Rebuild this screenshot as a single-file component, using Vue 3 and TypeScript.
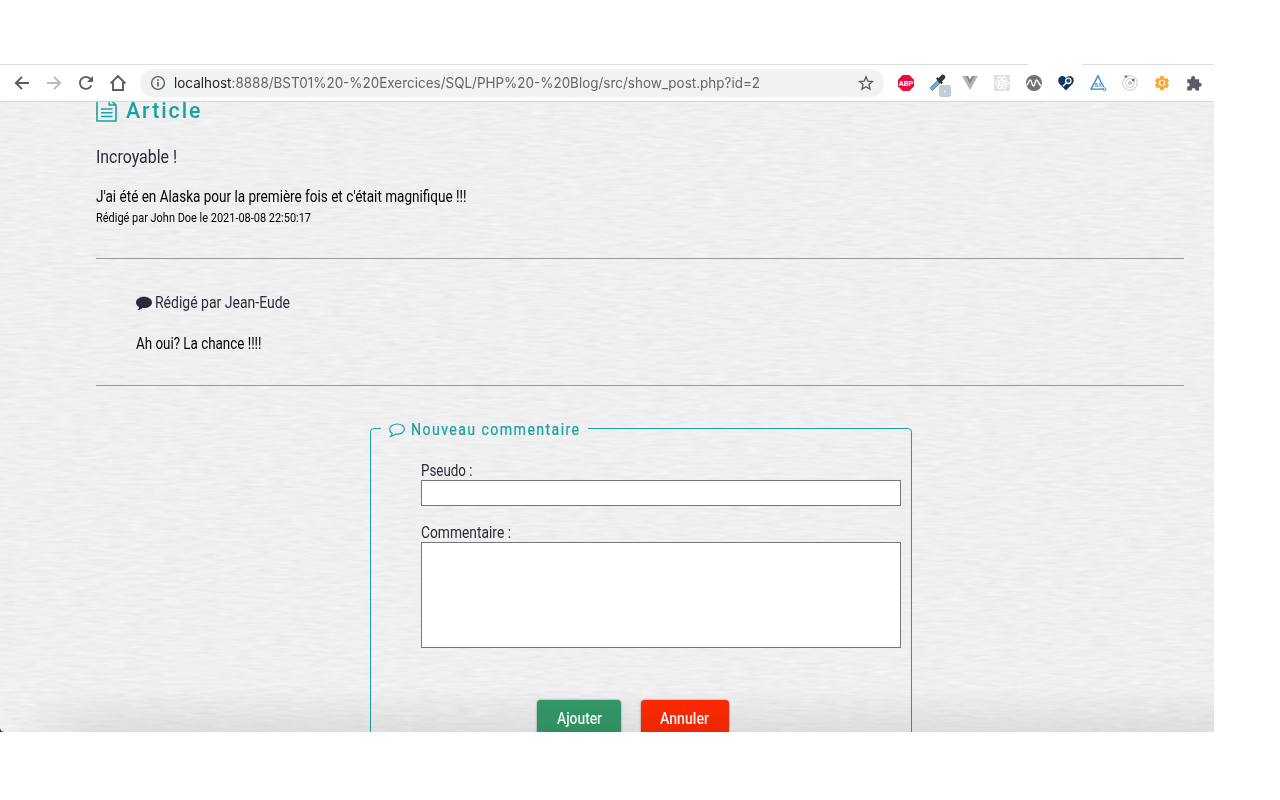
<script setup lang="ts">
import type { Directive } from 'vue'

// Condenses a line of text horizontally so it takes the given width.
const vFit: Directive<HTMLElement, number> = {
  mounted(el, { value }) {
    const natural = el.getBoundingClientRect().width
    el.style.transform = `scaleX(${value / natural})`
    el.style.marginRight = `${value - natural}px`
  },
}
</script>

<template>
  <main class="window">
    <header class="toolbar">
      <nav class="nav">
        <svg width="20" height="20" viewBox="0 0 20 20"><path d="M17 10H4M10 3.8L3.8 10l6.2 6.2" fill="none" stroke="#5a5d61" stroke-width="1.9" /></svg>
        <svg width="20" height="20" viewBox="0 0 20 20"><path d="M3 10h13M10 3.8l6.2 6.2-6.2 6.2" fill="none" stroke="#b9bbbe" stroke-width="1.9" /></svg>
        <svg width="20" height="20" viewBox="0 0 20 20"><path d="M15.4 12.3A6 6 0 1 1 14.3 5.8L16 7.6" fill="none" stroke="#5a5d61" stroke-width="1.9" /><path d="M17 3v6h-6z" fill="#5a5d61" /></svg>
        <svg width="20" height="20" viewBox="0 0 20 20"><path d="M2.6 10.4L10 3.2l7.4 7.2M5 9v8h10V9" fill="none" stroke="#5a5d61" stroke-width="1.9" /></svg>
      </nav>
      <div class="address">
        <svg width="16" height="16" viewBox="0 0 16 16"><circle cx="8" cy="8" r="6.4" fill="none" stroke="#5a5d61" stroke-width="1.4" /><path d="M8 7v4.6M8 4.3v1.6" stroke="#5a5d61" stroke-width="1.6" /></svg>
        <div class="url"><span v-fit="586" class="fit"><b>localhost</b>:8888/BST01%20-%20Exercices/SQL/PHP%20-%20Blog/src/show_post.php?id=2</span></div>
        <svg width="16" height="16" viewBox="0 0 16 16"><path d="M8 1.8l1.8 4.3 4.7.4-3.6 3 1.1 4.6L8 11.7l-4 2.4 1.1-4.6-3.600-3 4.700-.4z" fill="none" stroke="#5a5d61" stroke-width="1.300" /></svg>
      </div>
      <div class="extensions">
        <svg width="18" height="18" viewBox="0 0 18 18"><path d="M5.700 1h6.600L17 5.700v6.600L12.300 17H5.700L1 12.300V5.700z" fill="#ed0a3f" /><text x="9" y="12.200" text-anchor="middle" textLength="14.500" lengthAdjust="spacingAndGlyphs" class="abp">ABP</text></svg>
        <svg width="22" height="24" viewBox="0 0 22 24"><path d="M2 16.500L10.500 8" stroke="#66717b" stroke-width="4" /><path d="M2.500 16l7-7" stroke="#68b4e4" stroke-width="2.600" /><path d="M7.800 5l5.400 5.400" stroke="#27292d" stroke-width="2.200" /><path d="M11 7l3-3" stroke="#343538" stroke-width="4.600" stroke-linecap="round" /><rect x="10" y="12" width="12" height="12" rx="2" fill="#bfced8" /><rect x="15.200" y="17.800" width="1.600" height="1.600" fill="#fff" /></svg>
        <svg width="18" height="18" viewBox="0 0 18 18"><path d="M1 2h5l3 5.500L12 2h5L9 16z" fill="#b4b4b4" /><path d="M4.600 2H7l2 3.500L11 2h2.400L9 9.800z" fill="#888" /></svg>
        <svg width="16" height="16" viewBox="0 0 16 16"><path fill="#e2e2e2" d="M0 0h16v16H0z" /><g fill="none" stroke="#fff" stroke-width="1"><ellipse cx="8" cy="8" rx="6.500" ry="2.600" /><ellipse cx="8" cy="8" rx="6.500" ry="2.600" transform="rotate(60 8 8)" /><ellipse cx="8" cy="8" rx="6.500" ry="2.600" transform="rotate(120 8 8)" /></g><circle cx="8" cy="8" r="1.400" fill="#fff" /></svg>
        <svg width="16" height="16" viewBox="0 0 16 16"><circle cx="8" cy="8" r="8" fill="#737373" /><path d="M.5 10.500C2.500 10 2.500 5 4.200 5s1.500 6 3.300 6 1.400-6 3.200-6 1.700 5.700 4.800 5.700" fill="none" stroke="#fff" stroke-width="1.400" /></svg>
        <svg width="16" height="16" viewBox="0 0 16 16"><path d="M8 15.500L1.200 8.600C-.8 6 .3 1.300 4.100 1.100 6 1 7.300 2 8 3.200 8.700 2 10 1 11.900 1.100c3.800.2 4.900 4.900 2.900 7.500z" fill="#0d3569" /><circle cx="10.300" cy="5.800" r="2.700" fill="#164f86" stroke="#fff" stroke-width="1.300" /><path d="M8.300 7.800L5 11.200" stroke="#fff" stroke-width="1.400" /></svg>
        <svg width="18" height="18" viewBox="0 0 18 18"><path d="M14 15.200H2L9 2l5.600 11" fill="none" stroke="#2c83ca" stroke-width="1.300" /><circle cx="15.500" cy="15.200" r="1.400" fill="#fff" stroke="#2c83ca" /><text x="9" y="13.400" text-anchor="middle" class="axe">ax</text></svg>
        <svg width="18" height="18" viewBox="0 0 18 18"><g fill="none" stroke="#c9c9c9"><circle cx="9" cy="9" r="7.300" /><circle cx="9" cy="9" r="4.300" /></g><circle cx="9" cy="9" r="2.100" fill="#c6c6c6" /><circle cx="5" cy="2.500" r="1.500" fill="#888" /><circle cx="12.200" cy="6" r="1.500" fill="#777" /></svg>
        <svg width="16" height="16" viewBox="0 0 16 16"><path d="M6.300 1h3.400l.5 2 1.200.7 2-.6 1.700 3-1.500 1.400v1.200l1.500 1.400-1.700 3-2-.6-1.200.7-.5 2H6.300l-.5-2-1.200-.7-2 .6-1.700-3 1.500-1.400V7.500L.9 6.100l1.700-3 2 .6L5.800 3z" fill="#faa936" /><circle cx="8" cy="8" r="3.300" fill="#fff0c8" /><path d="M6.500 5.300L8 6.400l1.500-1.100v3L8 11 6.500 8.300z" fill="#f39b29" /></svg>
        <svg width="16" height="16" viewBox="0 0 16 16"><path d="M1.200 4.200h3.900V3a2 2 0 0 1 4 0v1.200h4v3.500h.6a2 2 0 0 1 0 4.100h-.6v3.700H9.500v-.7a1.900 1.900 0 0 0-3.800 0v.7H1.200v-3.900h.6a1.900 1.900 0 0 0 0-3.800h-.6z" fill="#5a5d61" /></svg>
      </div>
    </header>

    <section class="page">
      <svg class="paper" width="1214" height="630">
        <filter id="grain" x="0" y="0" width="100%" height="100%" color-interpolation-filters="sRGB">
          <feTurbulence type="fractalNoise" baseFrequency="0.055 0.38" numOctaves="4" seed="7" />
          <feColorMatrix values="0.055 0.035 0 0 0.893  0.055 0.035 0 0 0.893  0.055 0.035 0 0 0.893  0 0 0 0 1" />
        </filter>
        <rect width="1214" height="630" filter="url(#grain)" />
      </svg>
      <div class="content">
        <h1 class="title">
          <svg width="21" height="24" viewBox="0 0 21 24"><path d="M1 1h12.500L20 7v16H1zM13.200 1v6H20" fill="none" stroke="#18a1a6" stroke-width="1.600" /><path d="M5 11h11.500M5 14.700h11.500M5 18.400h11.500" fill="none" stroke="#18a1a6" stroke-width="1.500" /></svg>
          <span v-fit="76.500" class="fit">Article</span>
        </h1>
        <h2 class="subject"><span v-fit="81" class="fit">Incroyable !</span></h2>
        <p class="body"><span v-fit="370.500" class="fit">J'ai été en Alaska pour la première fois et c'était magnifique !!!</span></p>
        <p class="meta"><span v-fit="215" class="fit">Rédigé par John Doe le 2021-08-08 22:50:17</span></p>
        <div class="rule"></div>
        <article class="comment">
          <h3 class="author">
            <svg width="16" height="15" viewBox="0 0 16 15"><path d="M8 .8c4.500 0 8 2.500 8 5.600S12.500 12 8 12l-1.700-.1C5 13.200 3.300 14.100 1.300 14.300c1-.9 1.700-2 1.800-3.300C1.200 9.900 0 8.300 0 6.400 0 3.300 3.500.8 8 .8z" fill="#2d2a37" /></svg>
            <span v-fit="135" class="fit">Rédigé par Jean-Eude</span>
          </h3>
          <p class="reply"><span v-fit="125.500" class="fit">Ah oui? La chance !!!!</span></p>
        </article>
        <div class="rule second"></div>
        <fieldset class="form">
          <legend>
            <svg width="16" height="15" viewBox="0 0 16 15"><path d="M8.200 1c4 0 7.200 2.200 7.200 5s-3.200 5.200-7.200 5.200l-1.900-.1c-1.200 1.300-2.700 2-4.600 2.300.9-.8 1.400-1.800 1.500-3C1.600 9.400.7 7.800.7 6.200.7 3.300 4.200 1 8.200 1z" fill="none" stroke="#18a1a6" stroke-width="1.200" /></svg>
            <span v-fit="169.500" class="fit">Nouveau commentaire</span>
          </legend>
          <div class="fields">
            <label for="pseudo"><span v-fit="51.500" class="fit">Pseudo :</span></label>
            <input id="pseudo" type="text" />
            <label for="text" class="next"><span v-fit="90" class="fit">Commentaire :</span></label>
            <textarea id="text"></textarea>
            <div class="actions">
              <button class="add" type="button"><span v-fit="45" class="fit">Ajouter</span></button>
              <button class="cancel" type="button"><span v-fit="49" class="fit">Annuler</span></button>
            </div>
          </div>
        </fieldset>
      </div>
      <div class="shade"></div>
      <div class="corner"></div>
    </section>
  </main>
</template>

<style>
body { background: #fff; }
</style>

<style scoped>
* { box-sizing: border-box; }
.window { width: 1214px; height: 732px; padding-top: 64px; overflow: hidden; font-family: Roboto, sans-serif; font-size: 16px; color: #000; }
.toolbar {
  display: flex; align-items: center; height: 38px; border-bottom: 1px solid #d4d5d7;
  background: linear-gradient(90deg, #dadce3 1028px, #fff 1028px, #fff 1082px, #dadce3 1082px) top / 100% 1px no-repeat #fff;
}
.nav { display: flex; gap: 12px; width: 140px; padding-left: 12px; }
.address { display: flex; align-items: center; width: 744px; height: 28px; padding: 0 10px; border-radius: 14px; background: #f1f2f4; }
.url { flex: 1; margin-left: 8px; font: 14px/20px Inter, sans-serif; color: #62656a; }
.url b { font-weight: 400; color: #202124; }
.extensions { display: grid; grid-template-columns: repeat(10, 32px); place-items: center; margin-left: 6px; height: 28px; margin-top: -1px; }
.extensions svg:nth-child(2) { margin: 5px 0 0 3px; }
.abp { font: 700 8px Roboto, sans-serif; fill: #fff; }
.axe { font: 7px Roboto, sans-serif; fill: #2c83ca; }
.fit { display: inline-block; white-space: nowrap; transform-origin: 0 50%; }
.page { position: relative; height: 630px; overflow: hidden; background: #efefef; }
.paper { position: absolute; inset: 0; }
.content { position: relative; padding: 0 30px 0 96px; display: flow-root; }
h1, h2, h3, p { margin: 0; font-weight: 400; }
.title { display: flex; gap: 9px; height: 21px; font-size: 21.500px; line-height: 18px; letter-spacing: 2px; font-weight: 500; color: #18a1a6; }
.title svg { margin-top: -4px; }
.subject { margin-top: 22px; height: 24px; font-size: 18.500px; line-height: 24px; color: #2d2a37; }
.body { margin-top: 17px; height: 20px; line-height: 22px; }
.meta { margin-top: 2px; height: 20px; font-size: 13px; line-height: 20px; }
.rule { margin-top: 30px; height: 1px; width: 1088px; background: #989898; }
.rule.second { margin-top: 31px; }
.comment { padding: 34px 0 0 40px; }
.author { display: flex; gap: 3px; height: 20px; font-size: 16px; line-height: 20px; color: #2d2a37; }
.author svg { margin-top: 3px; }
.reply { margin-top: 21px; height: 20px; line-height: 20px; }
.form { width: 542px; height: 400px; margin: 32px 0 0 274px; padding: 0 10px; border: 1px solid #18a1a6; border-radius: 4px; }
legend { display: flex; gap: 6px; width: 207px; height: 21px; padding: 0 0 0 8px; line-height: 24px; letter-spacing: 1.600px; color: #18a1a6; -webkit-text-stroke: .2px; }
legend svg { margin-top: 5px; }
.fields { margin-left: 40px; padding-top: 21px; color: #2d2a37; }
label { display: block; height: 20px; line-height: 22px; }
label.next { margin-top: 16px; }
input, textarea { display: block; width: 480px; border: 1px solid #777; border-radius: 0; background: #fff; margin: 0; resize: none; }
input { height: 26px; }
textarea { height: 106px; }
.actions { display: flex; gap: 20px; margin: 52px 0 0 116px; }
button { height: 40px; padding: 0 0 2px 20px; border: 0; border-radius: 4px; font: 500 16px/38px Roboto, sans-serif; text-align: left; white-space: nowrap; color: #fff; box-shadow: 0 0 2px rgba(0, 0, 0, .5); }
.add { width: 84px; background: #349a6a; }
.cancel { width: 88px; padding-left: 19px; background: #ff2a04; }
.shade { position: absolute; inset: auto 0 0; height: 44px; background: linear-gradient(transparent, rgba(0, 0, 0, .07)); mask-image: linear-gradient(90deg, transparent, #000 100px); }
.corner { position: absolute; left: 0; bottom: 0; width: 4px; height: 4px; background: radial-gradient(circle at 100% 0, transparent 3.500px, #243b2c 4px); }
</style>
